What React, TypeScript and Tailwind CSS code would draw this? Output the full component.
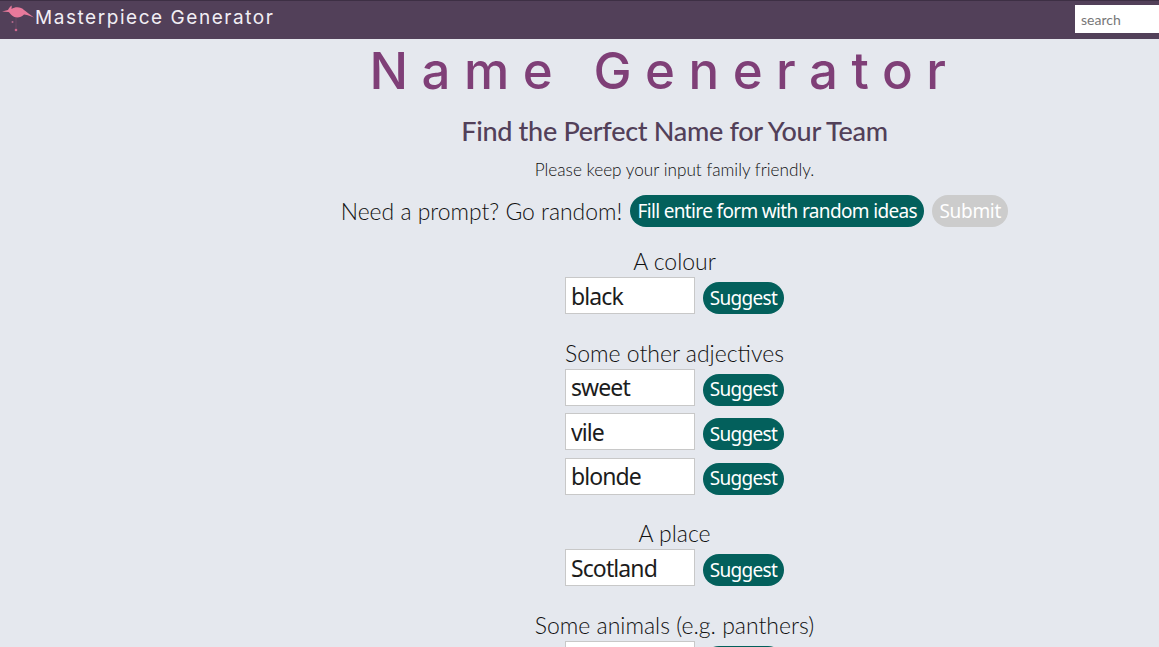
import React from 'react';

const labelFont = "font-['Lato','Open_Sans',sans-serif]";
const btnFont = "font-['Noto_Sans','Open_Sans',sans-serif]";

const groups = [
  { label: 'A colour', values: ['black'] },
  { label: 'Some other adjectives', values: ['sweet', 'vile', 'blonde'] },
  { label: 'A place', values: ['Scotland'] },
  { label: 'Some animals (e.g. panthers)', values: [''] },
];

function Flamingo() {
  return (
    <svg viewBox="0 0 36 34" className="w-[36px] h-[34px] shrink-0 -mt-[5px] -ml-[1px]">
      <path
        d="M3 10.5 L9 9 C10 7 11.5 5 12.5 4.5 C13 6 12.5 7 12.5 8 C16 5.5 22 5.5 25 9 C27 10.5 30 13 35 16.5 C30 14.5 27 13.5 25 13.5 C22 17 16 17.5 13 14.5 C11.5 13 10.5 11.5 9.5 11 Z"
        fill="#e8799b"
      />
      <path d="M17 16 L17 30" stroke="#a0607f" strokeWidth="0.6" opacity="0.5" />
      <circle cx="13.5" cy="21" r="1" fill="#b56a8c" />
      <circle cx="17" cy="29" r="1.3" fill="#d0688f" />
    </svg>
  );
}

function Suggest() {
  return (
    <button className={`${btnFont} w-[81px] h-[32px] rounded-full bg-[#03605c] text-white text-[19px] leading-none tracking-[-0.7px]`}>
      Suggest
    </button>
  );
}

function InputRow({ value }: { value: string }) {
  return (
    <div className="flex items-end gap-2 h-[37px]">
      <input
        readOnly
        value={value}
        className={`${btnFont} w-[130px] h-[37px] bg-white border border-[#c8c8c8] px-[5px] text-[23px] text-[#1c1c1c] tracking-[-0.9px] outline-none`}
      />
      <Suggest />
    </div>
  );
}

export default function App() {
  return (
    <div className="h-screen overflow-hidden bg-[#e5e8ee]">
      <nav className="h-[39px] bg-[#524059] border-t border-[#3d2f44] flex items-center justify-between">
        <div className="flex items-center">
          <Flamingo />
          <span className="font-['Inter',sans-serif] text-[19px] text-[#f1eef4] tracking-[1.55px] -mt-[3px] whitespace-nowrap">
            Masterpiece Generator
          </span>
        </div>
        <input
          readOnly
          placeholder="search"
          className={`${labelFont} w-[84px] h-[28px] -mt-[2px] bg-white px-[6px] text-[14px] placeholder:text-[#777] outline-none`}
        />
      </nav>
      <div className="flex">
        <div className="w-[190px] shrink-0" />
        <main className="flex-1 flex flex-col items-center">
          <h1 className="font-['Inter',sans-serif] mt-[1px] mr-[20px] h-[62px] text-[51px] leading-[62px] text-[#7f3f77] tracking-[13.5px] whitespace-nowrap font-medium">
            Name Generator
          </h1>
          <h2 className={`${labelFont} mt-[13px] h-[32px] text-[27px] leading-[32px] font-medium text-[#524059] tracking-[-0.3px] whitespace-nowrap`}>
            Find the Perfect Name for Your Team
          </h2>
          <p className={`${labelFont} mt-[10px] h-[26px] text-[17.2px] leading-[26px] font-light text-[#111111] whitespace-nowrap`}>
            Please keep your input family friendly.
          </p>
          <div className="mt-[12px] flex items-center gap-2 h-[32px]">
            <span className={`${labelFont} text-[22.9px] leading-[30px] font-light text-[#111111] whitespace-nowrap`}>Need a prompt? Go random!</span>
            <button className={`${btnFont} w-[294px] h-[32px] rounded-full bg-[#03605c] text-white text-[19px] leading-none tracking-[-0.65px] whitespace-nowrap`}>
              Fill entire form with random ideas
            </button>
            <button className={`${btnFont} w-[76px] h-[32px] rounded-full bg-[#cccccc] text-white text-[19px] leading-none tracking-[-0.3px]`}>
              Submit
            </button>
          </div>
          <div className="mt-[20px] flex flex-col gap-[24.7px]">
            {groups.map((g) => (
              <div key={g.label} className="flex flex-col items-center">
                <label className={`${labelFont} h-[30px] text-[23px] leading-[28px] font-light text-[#111111] whitespace-nowrap`}>
                  {g.label}
                </label>
                <div className="flex flex-col gap-[7.5px]">
                  {g.values.map((v, i) => (
                    <InputRow key={i} value={v} />
                  ))}
                </div>
              </div>
            ))}
          </div>
        </main>
      </div>
    </div>
  );
}
